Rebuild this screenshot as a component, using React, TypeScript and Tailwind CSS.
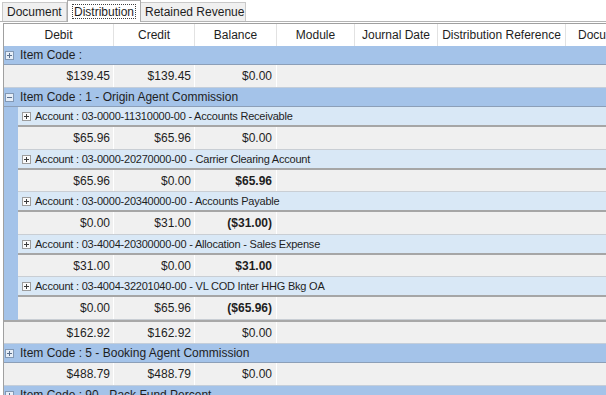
import React from "react";

function Expander({ open, item }: { open?: boolean; item?: boolean }) {
  const fill = item ? "#5a6f8c" : "#3c3c3c";
  return (
    <div
      className={
        item
          ? "w-[9px] h-[9px] border border-[#8298b4] bg-[#e6eef8] flex-none"
          : "w-[9px] h-[9px] border border-[#9c9c9c] bg-[#fafafa] flex-none"
      }
    >
      <svg width="7" height="7" viewBox="0 0 7 7" className="block">
        <rect x="1" y="3" width="5" height="1" fill={fill} />
        {!open && <rect x="3" y="1" width="1" height="5" fill={fill} />}
      </svg>
    </div>
  );
}

function ItemHeader({ label, open }: { label: string; open?: boolean }) {
  return (
    <div className="flex items-center h-[19px] bg-[#a4c3e9] border-b border-[#8c9fb8] pl-[1px] whitespace-nowrap">
      <Expander item open={open} />
      <span className="ml-[6px]">{label}</span>
    </div>
  );
}

function AccountHeader({ label }: { label: string }) {
  return (
    <div className="flex items-center h-[20px] bg-[#d9e8f6] border-b-2 border-[#a6a6a6] pl-[4px] whitespace-nowrap">
      <Expander />
      <span className="ml-[4px] text-[11px] tracking-[-0.22px]">{label}</span>
    </div>
  );
}

function DataCells({
  d,
  c,
  b,
  bold,
  nested,
}: {
  d: string;
  c: string;
  b: string;
  bold?: boolean;
  nested?: boolean;
}) {
  return (
    <>
      <div
        className={
          nested
            ? "w-[96px] flex-none h-full flex items-center justify-end pr-[3px] border-r border-white"
            : "w-[110px] flex-none h-full flex items-center justify-end pr-[3px] border-r border-white"
        }
      >
        {d}
      </div>
      <div className="w-[81px] flex-none h-full flex items-center justify-end pr-[3px] border-r border-white">
        {c}
      </div>
      <div
        className={
          bold
            ? "w-[82px] flex-none h-full flex items-center justify-end pr-[4px] border-r border-white font-bold"
            : "w-[82px] flex-none h-full flex items-center justify-end pr-[4px] border-r border-white"
        }
      >
        {b}
      </div>
      <div className="flex-1 h-full" />
    </>
  );
}

const accounts = [
  {
    label: "Account : 03-0000-11310000-00 - Accounts Receivable",
    d: "$65.96",
    c: "$65.96",
    b: "$0.00",
    bold: false,
    tall: true,
  },
  {
    label: "Account : 03-0000-20270000-00 - Carrier Clearing Account",
    d: "$65.96",
    c: "$0.00",
    b: "$65.96",
    bold: true,
    tall: false,
  },
  {
    label: "Account : 03-0000-20340000-00 - Accounts Payable",
    d: "$0.00",
    c: "$31.00",
    b: "($31.00)",
    bold: true,
    tall: true,
  },
  {
    label: "Account : 03-4004-20300000-00 - Allocation - Sales Expense",
    d: "$31.00",
    c: "$0.00",
    b: "$31.00",
    bold: true,
    tall: false,
  },
  {
    label: "Account : 03-4004-32201040-00 - VL COD Inter HHG Bkg OA",
    d: "$0.00",
    c: "$65.96",
    b: "($65.96)",
    bold: true,
    tall: true,
  },
];

export default function App() {
  return (
    <div className="w-[606px] h-[395px] overflow-hidden bg-white relative font-['Liberation_Sans',Arial,sans-serif] text-[12px] text-[#1e1e1e]">
      {/* Tabs */}
      <div className="flex items-end h-[21px] pl-[2px] relative z-10">
        <div className="h-[19px] w-[65px] flex-none flex items-center pl-[4px] border border-b-0 border-[#c9c9c9] bg-[#f0f0f0]">
          Document
        </div>
        <div className="h-[22px] -mb-px w-[74px] flex-none flex items-center justify-center border border-b-0 border-[#acacac] bg-white">
          <span className="border border-dotted border-[#404040] h-[15px] px-[1px] flex items-center">
            Distribution
          </span>
        </div>
        <div className="h-[19px] w-[105px] flex-none flex items-center pl-[4px] border border-b-0 border-l-0 border-[#c9c9c9] bg-[#f0f0f0]">
          Retained Revenue
        </div>
      </div>

      {/* Panel */}
      <div className="border-t border-[#b4b4b4] pt-[1px]">
        <div className="ml-[3px] border-l border-t border-[#a0a0a0] w-[700px]">
          {/* Column header */}
          <div className="flex h-[22px] bg-white">
            <div className="w-[110px] flex-none flex items-center justify-center border-r border-[#e2e2e2]">Debit</div>
            <div className="w-[81px] flex-none flex items-center justify-center border-r border-[#e2e2e2]">Credit</div>
            <div className="w-[82px] flex-none flex items-center justify-center border-r border-[#e2e2e2]">Balance</div>
            <div className="w-[78px] flex-none flex items-center justify-center border-r border-[#e2e2e2]">Module</div>
            <div className="w-[83px] flex-none flex items-center justify-center border-r border-[#e2e2e2]">Journal Date</div>
            <div className="w-[128px] flex-none flex items-center justify-center border-r border-[#e2e2e2]">Distribution Reference</div>
            <div className="flex-1 flex items-center pl-[12px] whitespace-nowrap">Document Number</div>
          </div>

          {/* Item Code : */}
          <ItemHeader label="Item Code :" />
          <div className="flex h-[23px] bg-[#f0f0f0] border-b border-[#c4ceda]">
            <DataCells d="$139.45" c="$139.45" b="$0.00" />
          </div>

          {/* Item Code : 1 */}
          <ItemHeader label="Item Code : 1 - Origin Agent Commission" open />
          <div className="flex border-b-2 border-[#a8a8a8]">
            <div className="w-[14px] flex-none bg-[#a4c3e9]" />
            <div className="flex-1 flex flex-col">
              {accounts.map((a) => (
                <div key={a.label} className="flex flex-col">
                  <AccountHeader label={a.label} />
                  <div
                    className={
                      a.tall
                        ? "flex h-[23px] bg-[#f0f0f0] border-b border-[#c9ced4]"
                        : "flex h-[22px] bg-[#f0f0f0] border-b border-[#c9ced4]"
                    }
                  >
                    <DataCells d={a.d} c={a.c} b={a.b} bold={a.bold} nested />
                  </div>
                </div>
              ))}
            </div>
          </div>
          <div className="flex h-[22px] bg-[#f0f0f0] border-b border-[#c4ceda]">
            <DataCells d="$162.92" c="$162.92" b="$0.00" />
          </div>

          {/* Item Code : 5 */}
          <ItemHeader label="Item Code : 5 - Booking Agent Commission" />
          <div className="flex h-[23px] bg-[#f0f0f0] border-b border-[#c4ceda]">
            <DataCells d="$488.79" c="$488.79" b="$0.00" />
          </div>

          {/* Item Code : 90 */}
          <ItemHeader label="Item Code : 90 - Pack Fund Percent" />
          <div className="flex h-[23px] bg-[#f0f0f0]">
            <DataCells d="$0.00" c="$0.00" b="$0.00" />
          </div>
        </div>
      </div>
    </div>
  );
}
